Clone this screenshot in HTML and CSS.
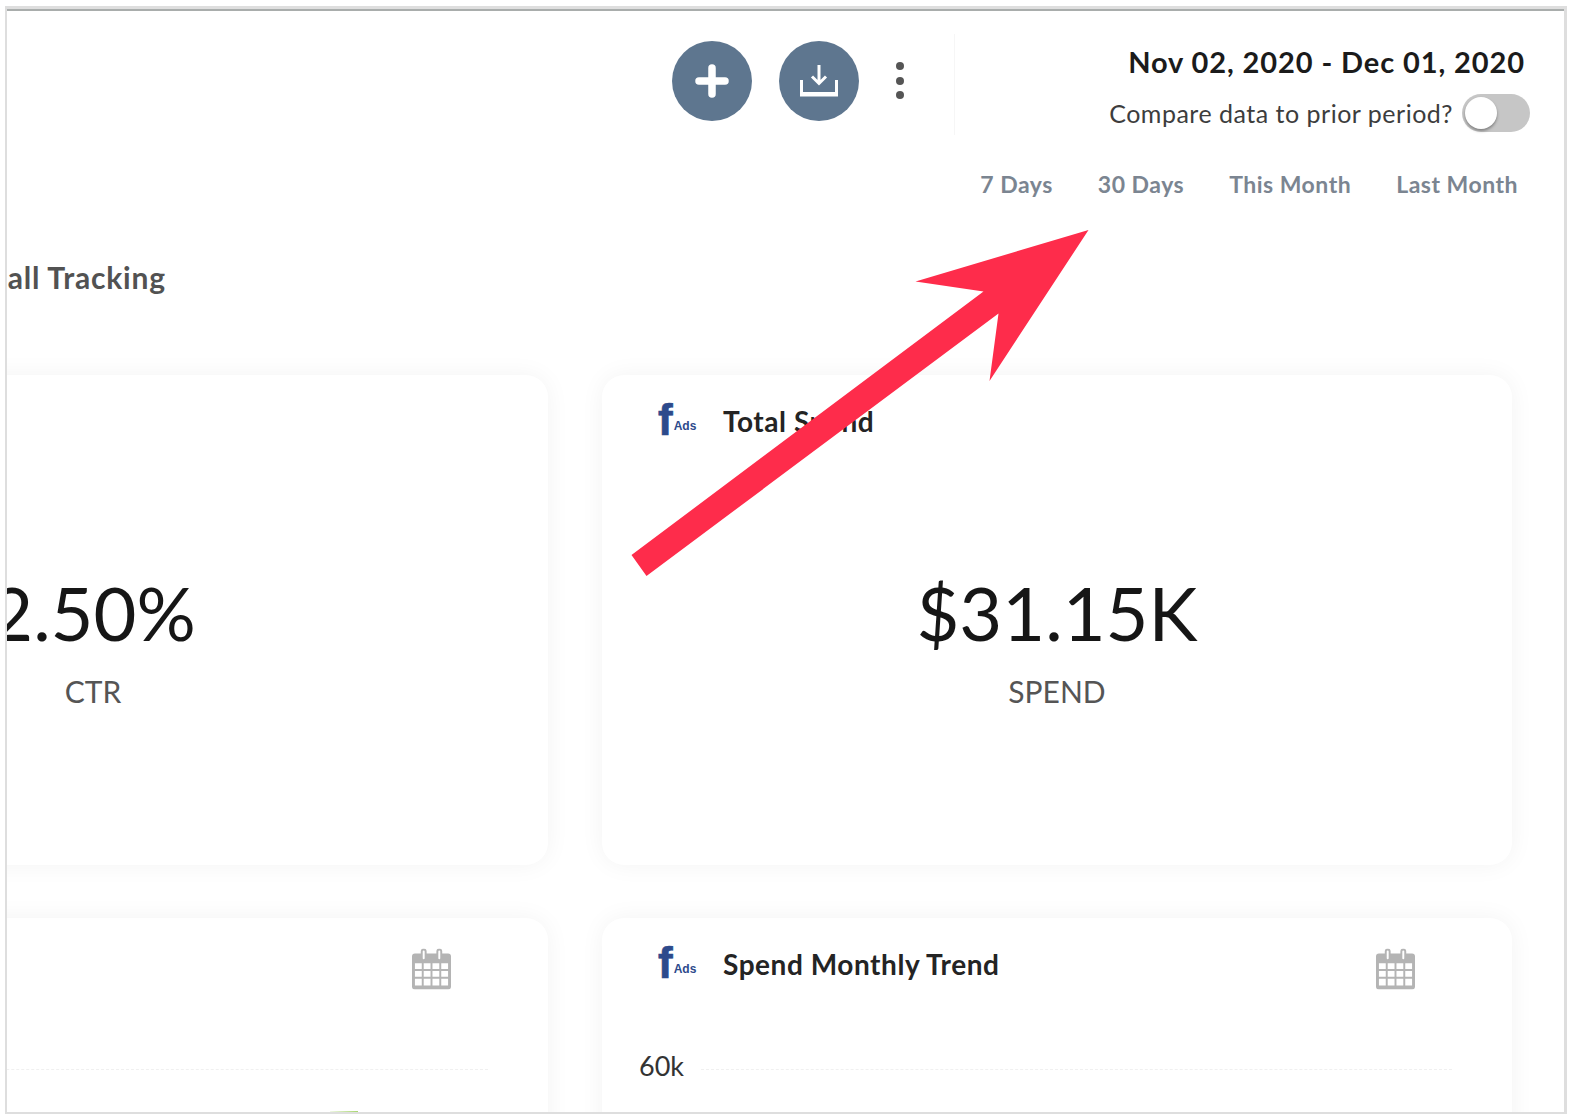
FILE: index.html
```html
<!DOCTYPE html>
<html lang="en">
<head>
<meta charset="utf-8">
<title>Dashboard</title>
<link rel="stylesheet" href="styles.css">
</head>
<body>
<div class="frame">
  <header class="topbar">
    <div class="actions">
      <button class="round-btn" type="button" aria-label="Add">
        <svg width="34" height="34" viewBox="0 0 34 34"><path d="M17 4v26M4 17h26" stroke="#fff" stroke-width="7.500" stroke-linecap="round" fill="none"/></svg>
      </button>
      <button class="round-btn" type="button" aria-label="Download">
        <svg width="40" height="36" viewBox="0 0 40 36"><path d="M2.500 17v15h35V17M20 2v18M13 13.500l7 7 7-7M2.500 30.500h35" stroke="#fff" stroke-width="3" fill="none"/></svg>
      </button>
      <div class="more" aria-label="More"><i></i><i></i><i></i></div>
    </div>
    <div class="range">
      <div class="range-date">Nov 02, 2020 - Dec 01, 2020</div>
      <div class="range-compare">
        <span>Compare data to prior period?</span>
        <span class="toggle"><span class="knob"></span></span>
      </div>
    </div>
  </header>
  <nav class="periods">
    <a>7 Days</a><a>30 Days</a><a>This Month</a><a>Last Month</a>
  </nav>
  <h2 class="section-title">Call Tracking</h2>
  <main class="grid">
    <section class="card stat">
      <div class="card-head"></div>
      <div class="value">2.50%</div>
      <div class="label">CTR</div>
    </section>
    <section class="card stat">
      <div class="card-head">
        <span class="fads"><b>f</b><small>Ads</small></span>
        <h3>Total Spend</h3>
      </div>
      <div class="value">$31.15K</div>
      <div class="label">SPEND</div>
    </section>
    <section class="card chart">
      <div class="card-head">
        <span class="head-space"></span>
        <svg class="cal" viewBox="0 0 40 42"><use href="#cal"/></svg>
      </div>
      <div class="axis"><span class="tick"></span><span class="gridline"></span></div>
      <div class="bar"></div>
    </section>
    <section class="card chart">
      <div class="card-head">
        <span class="fads"><b>f</b><small>Ads</small></span>
        <h3>Spend Monthly Trend</h3>
        <svg class="cal" viewBox="0 0 40 42"><use href="#cal"/></svg>
      </div>
      <div class="axis"><span class="tick">60k</span><span class="gridline"></span></div>
    </section>
  </main>
</div>
<svg class="defs" width="0" height="0">
  <symbol id="cal" viewBox="0 0 40 42">
    <path fill="#b4b4b4" fill-rule="evenodd" d="M3 5h6V3a3 3 0 0 1 6 0v2h10V3a3 3 0 0 1 6 0v2h6a3 3 0 0 1 3 3v31a3 3 0 0 1-3 3H3a3 3 0 0 1-3-3V8a3 3 0 0 1 3-3zM11 3v7a1 1 0 0 0 2 0V3a1 1 0 0 0-2 0zM27 3v7a1 1 0 0 0 2 0V3a1 1 0 0 0-2 0zM3 15v6h7v-6zM12 15v6h7v-6zM21 15v6h7v-6zM30 15v6h7v-6zM3 23v6h7v-6zM12 23v6h7v-6zM21 23v6h7v-6zM30 23v6h7v-6zM3 31v7h7v-7zM12 31v7h7v-7zM21 31v7h7v-7zM30 31v7h7v-7z"/>
  </symbol>
</svg>
<svg class="arrow" width="1573" height="1120" viewBox="0 0 1573 1120" aria-hidden="true">
  <polygon fill="#fe2c4b" points="1088.500,230 915.500,281.500 983.500,291.500 631.500,555 646.500,576 998.500,313.500 989.500,381"/>
</svg>
</body>
</html>
```
FILE: styles.css
```css
* { box-sizing: border-box; }
html, body { margin: 0; padding: 0; background: #fff; }
body {
  position: relative;
  width: 1573px;
  height: 1120px;
  overflow: hidden;
  padding: 6px 6px 6px 5px;
  font-family: Lato, "Open Sans", sans-serif;
}
.frame {
  height: 1108px;
  border: solid #dedede;
  border-width: 3px 3px 2px 2px;
  overflow: hidden;
  background: #fff;
  position: relative;
}
.frame::before {
  content: "";
  display: block;
  height: 2px;
  background: #a9adac;
}
.topbar {
  display: flex;
  justify-content: flex-end;
  height: 124px;
  padding-top: 23px;
}
.actions {
  display: flex;
  align-items: flex-start;
  padding-top: 7px;
  gap: 27px;
}
.round-btn {
  width: 80px;
  height: 80px;
  border: 0;
  border-radius: 50%;
  background: #5e768f;
  display: flex;
  align-items: center;
  justify-content: center;
  padding: 0;
}
.more {
  width: 8px;
  margin: 21px 50px 0 10px;
  display: flex;
  flex-direction: column;
  gap: 6.500px;
}
.more i {
  display: block;
  width: 8px;
  height: 8px;
  border-radius: 50%;
  background: #555;
}
.range {
  width: 610px;
  height: 101px;
  border-left: 1px solid #f6f6f6;
  padding-right: 34px;
  display: flex;
  flex-direction: column;
  align-items: flex-end;
}
.range-date {
  margin: 10px 5px 0 0;
  font-size: 29px;
  line-height: 36px;
  font-weight: 700;
  letter-spacing: .9px;
  color: #1b1b1b;
}
.range-compare {
  display: flex;
  align-items: center;
  gap: 9px;
  margin-top: 14px;
  font-size: 25px;
  line-height: 38px;
  letter-spacing: .5px;
  color: #3d3d3d;
}
.toggle {
  width: 68px;
  height: 38px;
  border-radius: 19px;
  background: #c6c6c6;
  display: block;
  padding: 3px;
}
.knob {
  display: block;
  width: 32px;
  height: 32px;
  border-radius: 50%;
  background: #fff;
  box-shadow: 0 2px 3px rgba(0,0,0,.35);
}
.periods {
  display: flex;
  justify-content: flex-end;
  gap: 45px;
  padding-right: 46px;
  margin-top: 34px;
  font-size: 23px;
  line-height: 30px;
  font-weight: 700;
  letter-spacing: .5px;
  color: #7b8591;
}
.section-title {
  margin: 59px 0 0 -20px;
  font-size: 30px;
  line-height: 38px;
  font-weight: 700;
  letter-spacing: .8px;
  color: #525252;
}
.grid {
  display: grid;
  grid-template-columns: 910px 910px;
  column-gap: 54px;
  row-gap: 53px;
  margin: 79px 0 0 -369px;
}
.card {
  border-radius: 22px;
  background: #fff;
  box-shadow: 0 0 24px rgba(0,0,0,.05);
  position: relative;
  overflow: hidden;
}
.stat {
  height: 490px;
}
.chart {
  height: 300px;
}
.card-head {
  display: flex;
  align-items: center;
  height: 46px;
  margin-top: 24px;
  padding: 0 97px 0 56px;
}
.card-head h3 {
  margin: -2px 0 0;
  font-size: 28px;
  line-height: 36px;
  font-weight: 700;
  letter-spacing: .55px;
  color: #242424;
}
.head-space { flex: 1; }
.fads {
  display: flex;
  align-items: flex-end;
  width: 65px;
  height: 40px;
  margin-bottom: 4px;
  color: #2d4a8c;
  font-family: "Liberation Sans", sans-serif;
}
.fads b {
  font-size: 44px;
  line-height: 40px;
  font-weight: 700;
  -webkit-text-stroke: .7px #2d4a8c;
}
.fads small {
  font-size: 12px;
  line-height: 27px;
  font-weight: 700;
  margin-left: 1px;
}
.cal {
  width: 39px;
  height: 42px;
  margin: 8px 0 0 auto;
}
.value {
  margin-top: 123px;
  text-align: center;
  font-size: 74px;
  line-height: 90px;
  font-weight: 400;
  color: #161616;
}
.label {
  margin-top: 15px;
  text-align: center;
  font-size: 30px;
  line-height: 36px;
  font-weight: 400;
  color: #555;
}
.axis {
  display: flex;
  align-items: center;
  margin-top: 61px;
  padding: 0 60px 0 37px;
  height: 34px;
}
.tick {
  width: 62px;
  font-size: 27px;
  line-height: 34px;
  color: #333;
}
.gridline {
  flex: 1;
  margin-top: 7px;
  border-top: 1px dashed #f0f0f0;
}
.bar {
  position: absolute;
  left: 692px;
  top: 193px;
  width: 28px;
  height: 30px;
  background: linear-gradient(90deg, #f0f8e6, #a8d66e);
}
.defs { position: absolute; }
.arrow {
  position: absolute;
  left: 0;
  top: 0;
  pointer-events: none;
}
```
